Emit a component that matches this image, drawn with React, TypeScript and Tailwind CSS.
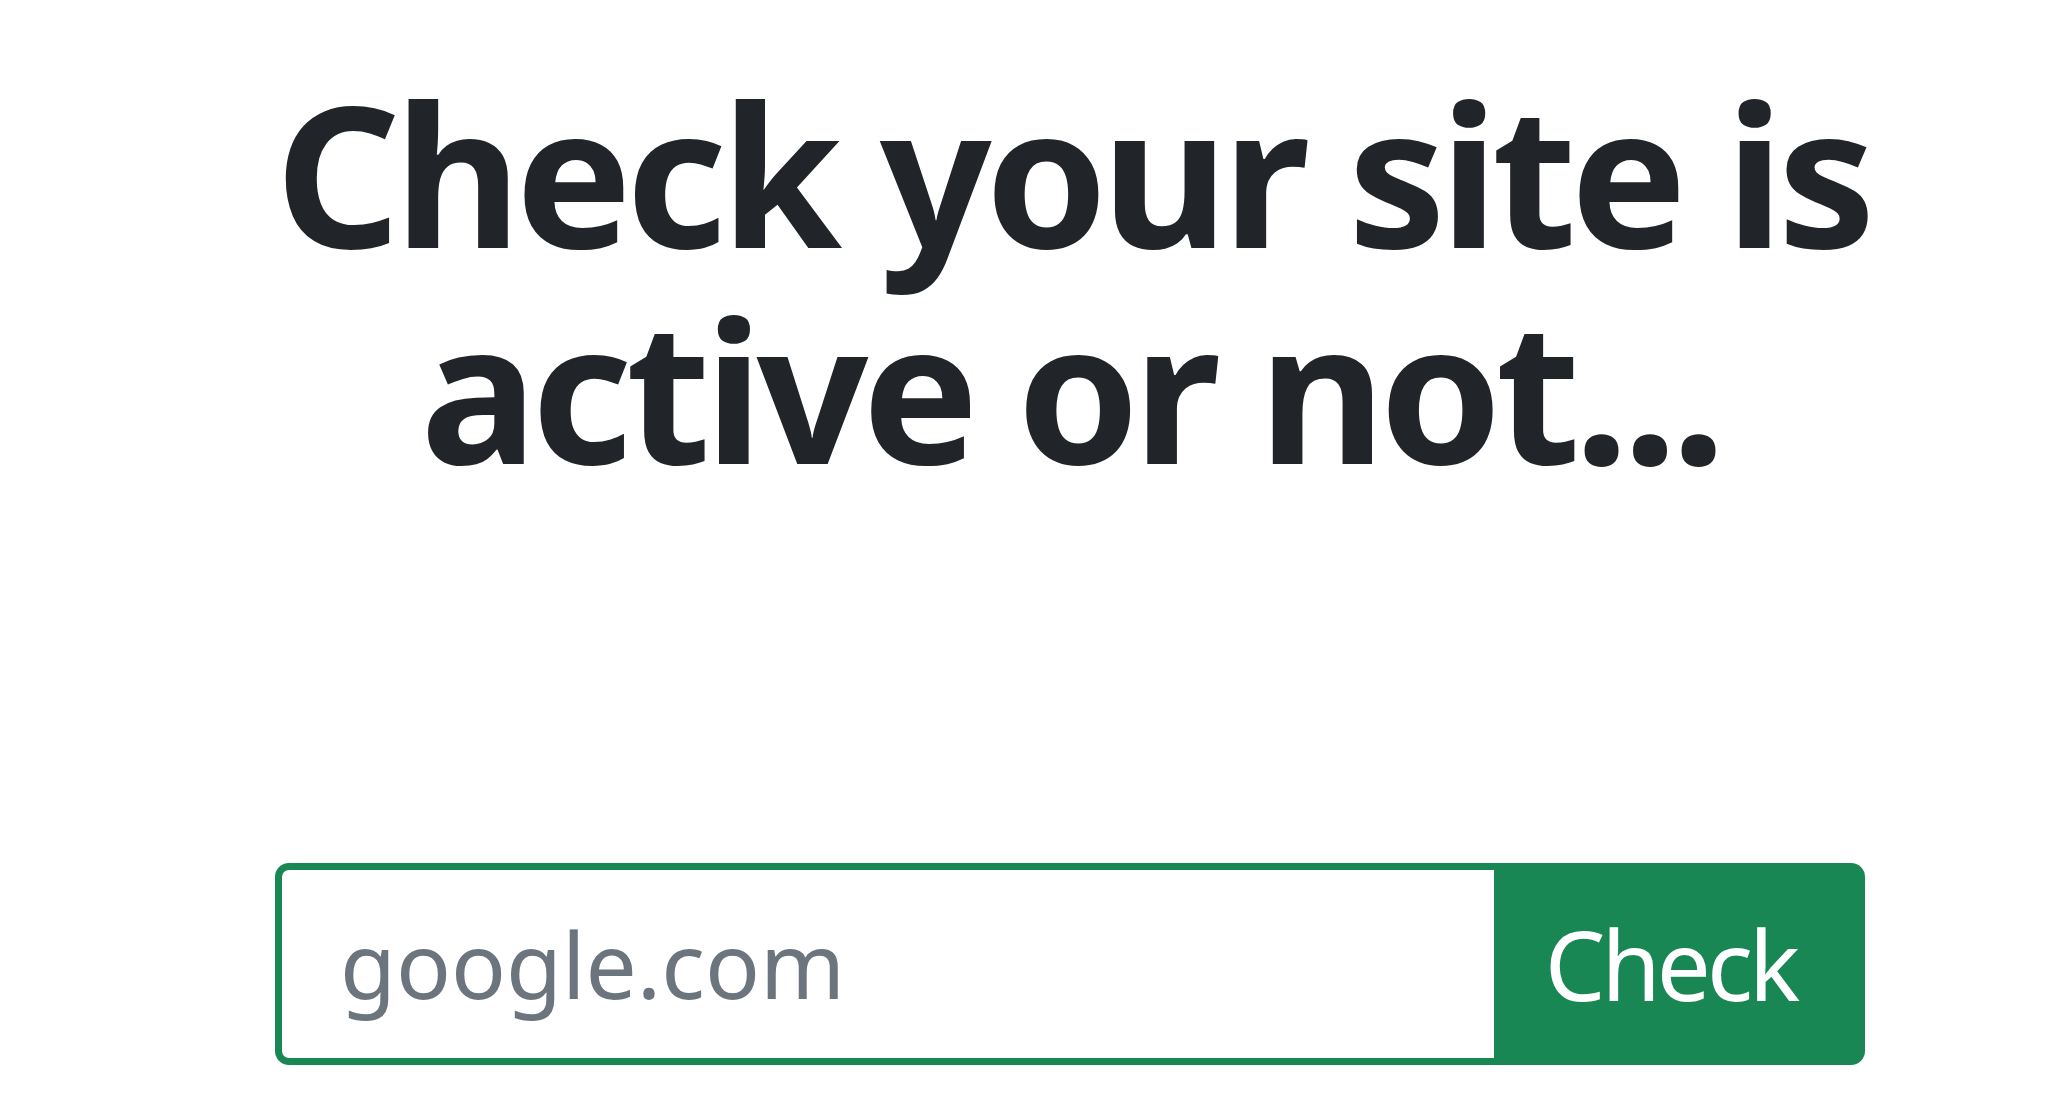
import React from 'react';

export default function App() {
  return (
    <div className="min-h-screen w-full bg-white font-['Noto_Sans','Open_Sans',sans-serif]">
      <div className="ml-[275px] w-[1590px] pt-[64px]">
        <h1 className="whitespace-nowrap text-center text-[196px] font-bold leading-[216px] tracking-[-6.5px] text-[#212529]">
          <span className="block pr-[12px]">Check your site is</span>
          <span className="block">active or not...</span>
        </h1>
        <form className="mt-[367px] flex h-[202px] w-full" onSubmit={(e) => e.preventDefault()}>
          <input
            type="text"
            placeholder="google.com"
            className="h-full min-w-0 flex-1 rounded-l-[14px] border-[7px] border-r-0 border-[#198754] bg-white pl-[58px] text-[91px] text-[#212529] outline-none placeholder:text-[#6c757d]"
          />
          <button
            type="submit"
            className="h-full w-[371px] rounded-r-[14px] bg-[#198754] pr-[18px] text-[96px] tracking-[-4px] text-white"
          >
            Check
          </button>
        </form>
      </div>
    </div>
  );
}
